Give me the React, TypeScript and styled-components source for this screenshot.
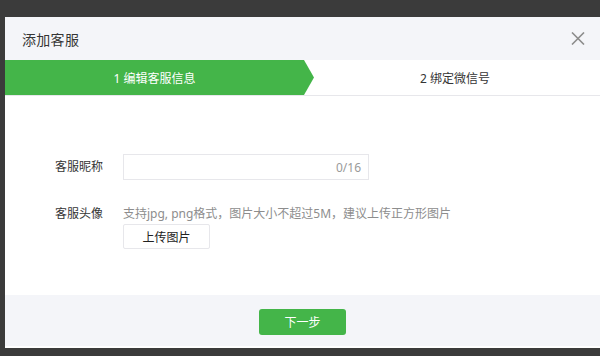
import React from "react";
import styled, { createGlobalStyle } from "styled-components";

const Global = createGlobalStyle`
  html, body { margin: 0; padding: 0; background: #3b3b3b; }
  body { font-family: "Noto Sans", "Noto Sans CJK SC", sans-serif; }
  * { box-sizing: border-box; }
`;

const Page = styled.div`
  width: 600px;
  height: 356px;
  padding: 17px 0 0 5px;
  background: #3b3b3b;
  overflow: hidden;
`;

const Dialog = styled.div`
  width: 595px;
  display: flex;
  flex-direction: column;
  background: #fff;
`;

const Header = styled.div`
  height: 43px;
  background: #f4f5f9;
  display: flex;
  align-items: center;
  justify-content: space-between;
  padding: 0 14px 0 17px;
`;

const Title = styled.h3`
  margin: 0;
  font-size: 14px;
  font-weight: normal;
  color: #353535;
  letter-spacing: 0.3px;
`;

const Close = styled.button`
  border: 0;
  background: transparent;
  padding: 0;
  width: 16px;
  height: 16px;
  display: flex;
  align-items: center;
  justify-content: center;
  cursor: pointer;
`;

const Steps = styled.div`
  display: flex;
  height: 36px;
  border-bottom: 1px solid #e7e7eb;
`;

const Step = styled.div<{ $active?: boolean }>`
  display: flex;
  align-items: center;
  justify-content: center;
  font-size: 12px;
  ${(p) =>
    p.$active
      ? `
    flex: 0 0 309px;
    padding-right: 10px;
    background: #44b549;
    color: #fff;
    clip-path: polygon(0 0, calc(100% - 10px) 0, 100% 50%, calc(100% - 10px) 100%, 0 100%);
  `
      : `
    flex: 1;
    color: #353535;
    padding-right: 4px;
  `}
`;

const Body = styled.div`
  height: 199px;
  padding: 58px 0 0 50px;
  display: flex;
  flex-direction: column;
  gap: 25px;
`;

const Row = styled.div<{ $top?: boolean }>`
  display: flex;
  align-items: ${(p) => (p.$top ? "flex-start" : "center")};
`;

const Label = styled.label`
  width: 68px;
  font-size: 12px;
  color: #353535;
  line-height: 18px;
`;

const InputBox = styled.div`
  width: 246px;
  height: 26px;
  border: 1px solid #e7e7eb;
  display: flex;
  align-items: center;
  padding: 0 7px 0 8px;
`;

const Input = styled.input`
  flex: 1;
  min-width: 0;
  border: 0;
  outline: none;
  font: inherit;
  font-size: 12px;
  background: transparent;
`;

const Counter = styled.span`
  font-size: 12px;
  color: #9a9a9a;
`;

const Field = styled.div`
  display: flex;
  flex-direction: column;
  align-items: flex-start;
  gap: 1px;
`;

const Hint = styled.p`
  margin: 0;
  font-size: 12px;
  line-height: 18px;
  color: #8d8d8d;
`;

const UploadButton = styled.button`
  width: 87px;
  height: 25px;
  border: 1px solid #e7e7eb;
  border-radius: 2px;
  background: #fff;
  font: inherit;
  font-size: 12px;
  color: #222;
  cursor: pointer;
`;

const Footer = styled.div`
  height: 53px;
  background: #f4f5f9;
  border-bottom: 2px solid #fff;
  display: flex;
  justify-content: center;
  align-items: flex-start;
  padding-top: 14px;
`;

const PrimaryButton = styled.button`
  width: 87px;
  height: 26px;
  border: 0;
  border-radius: 3px;
  background: #44b549;
  color: #fff;
  font: inherit;
  font-size: 12px;
  cursor: pointer;
`;

export default function App() {
  return (
    <>
      <Global />
      <Page>
        <Dialog>
          <Header>
            <Title>添加客服</Title>
            <Close aria-label="关闭">
              <svg width="14" height="13" viewBox="0 0 14 13">
                <path d="M1 0.5 L13 12.5 M13 0.5 L1 12.5" stroke="#8c8c8c" strokeWidth="1.6" />
              </svg>
            </Close>
          </Header>
          <Steps>
            <Step $active>1 编辑客服信息</Step>
            <Step>2 绑定微信号</Step>
          </Steps>
          <Body>
            <Row>
              <Label>客服昵称</Label>
              <InputBox>
                <Input />
                <Counter>0/16</Counter>
              </InputBox>
            </Row>
            <Row $top>
              <Label>客服头像</Label>
              <Field>
                <Hint>支持jpg, png格式，图片大小不超过5M，建议上传正方形图片</Hint>
                <UploadButton>上传图片</UploadButton>
              </Field>
            </Row>
          </Body>
          <Footer>
            <PrimaryButton>下一步</PrimaryButton>
          </Footer>
        </Dialog>
      </Page>
    </>
  );
}
